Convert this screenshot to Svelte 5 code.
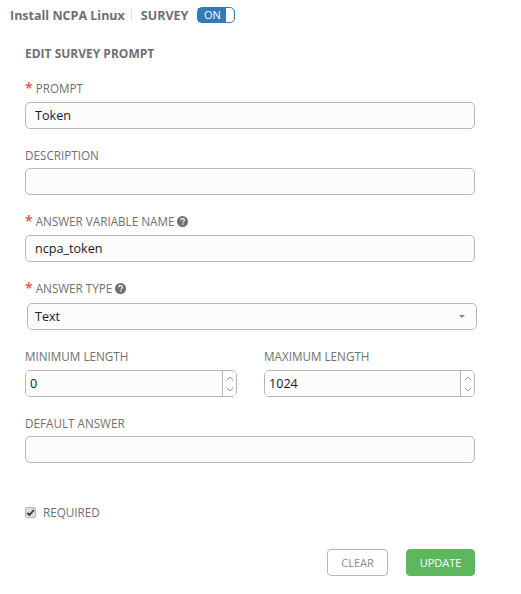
<script lang="ts">
    let prompt = $state("Token");
    let description = $state("");
    let variable = $state("ncpa_token");
    let minLength = $state("0");
    let maxLength = $state("1024");
    let defaultAnswer = $state("");
    let surveyOn = $state(true);
</script>

{#snippet help()}
    <svg class="help" viewBox="0 0 11 11" width="11" height="11" aria-hidden="true">
        <circle cx="5.5" cy="5.5" r="5.5" fill="#707070" />
        <path d="M3.7 4.3c0-1.1.9-1.7 1.9-1.7s1.8.7 1.8 1.5c0 1.3-1.4 1.2-1.4 2.3" fill="none" stroke="#fff" stroke-width="1.2" />
        <rect x="5.2" y="7.4" width="1.3" height="1.3" fill="#fff" />
    </svg>
{/snippet}

{#snippet spinner()}
    <div class="spinner">
        <svg viewBox="0 0 8 5" width="8" height="5"><path d="M.7 4.3 4 1l3.3 3.3" /></svg>
        <svg viewBox="0 0 8 5" width="8" height="5"><path d="M.7.7 4 4 7.3.7" /></svg>
    </div>
{/snippet}

<div class="page">
    <header class="title-bar">
        <span class="job-name">Install NCPA Linux</span>
        <span class="divider"></span>
        <span class="survey">SURVEY</span>
        <button class="toggle" class:on={surveyOn} onclick={() => (surveyOn = !surveyOn)}>
            <span class="toggle-label">ON</span>
            <span class="toggle-knob"></span>
        </button>
    </header>

    <form class="form" onsubmit={(e) => e.preventDefault()}>
        <h2>EDIT SURVEY PROMPT</h2>

        <div class="field first">
            <label for="prompt"><span class="req">*</span> PROMPT</label>
            <input id="prompt" bind:value={prompt} />
        </div>

        <div class="field">
            <label for="description">DESCRIPTION</label>
            <input id="description" bind:value={description} />
        </div>

        <div class="field plus-one">
            <label for="variable"><span class="req">*</span> ANSWER VARIABLE NAME {@render help()}</label>
            <input id="variable" bind:value={variable} />
        </div>

        <div class="field plus-two">
            <label for="type"><span class="req">*</span> ANSWER TYPE {@render help()}</label>
            <div class="select" id="type">
                <span>Text</span>
                <span class="caret"></span>
            </div>
        </div>

        <div class="field plus-one two-col">
            <div>
                <label for="min">MINIMUM LENGTH</label>
                <div class="number">
                    <input id="min" bind:value={minLength} />
                    {@render spinner()}
                </div>
            </div>
            <div>
                <label for="max">MAXIMUM LENGTH</label>
                <div class="number">
                    <input id="max" bind:value={maxLength} />
                    {@render spinner()}
                </div>
            </div>
        </div>

        <div class="field">
            <label for="default">DEFAULT ANSWER</label>
            <input id="default" bind:value={defaultAnswer} />
        </div>

        <div class="required">
            <span class="check">
                <svg viewBox="0 0 9 9" width="9" height="9"><path d="M1.2 4.8 3.4 7l4.4-5" /></svg>
            </span>
            <span>REQUIRED</span>
        </div>

        <div class="actions">
            <button class="btn clear" type="button">CLEAR</button>
            <button class="btn update" type="submit">UPDATE</button>
        </div>
    </form>
</div>

<style>
    :global(body) {
        margin: 0;
        background: #fff;
    }

    .page {
        width: 521px;
        height: 594px;
        box-sizing: border-box;
        padding-top: 6px;
        font-family: "Open Sans", sans-serif;
        color: #707070;
        overflow: hidden;
    }

    .title-bar {
        display: flex;
        align-items: center;
        height: 18px;
        padding-left: 10px;
        font-size: 12.5px;
        font-weight: 700;
    }

    .divider {
        width: 1px;
        height: 13px;
        margin: 0 9px 0 6px;
        background: #e1e1e1;
    }

    .toggle {
        display: flex;
        align-items: stretch;
        width: 38px;
        height: 16px;
        margin-left: 9px;
        padding: 0;
        border: 1px solid #337ab7;
        border-radius: 5px;
        background: #fff;
        font: inherit;
    }

    .toggle-label {
        flex: 1;
        background: #337ab7;
        color: #fff;
        font-size: 11px;
        font-weight: 400;
        line-height: 14px;
        text-align: center;
    }

    .toggle-knob {
        width: 8px;
    }

    .form {
        padding: 0 46px 0 25px;
    }

    h2 {
        margin: 21px 0 0;
        font-size: 12px;
        font-weight: 700;
        line-height: 18px;
    }

    .field {
        margin-top: 17px;
    }

    .field.first {
        margin-top: 16px;
    }

    label {
        display: flex;
        align-items: center;
        height: 18px;
        margin-bottom: 4px;
        font-size: 11.7px;
        line-height: 18px;
        white-space: pre;
    }

    .first label,
    .plus-one label {
        margin-bottom: 5px;
    }

    .plus-two label {
        margin-bottom: 6px;
    }

    .req {
        color: #d9534f;
        font-size: 14px;
        font-weight: 600;
    }

    input {
        display: block;
        width: 100%;
        height: 27px;
        box-sizing: border-box;
        padding: 0 9px;
        border: 1px solid #b7b7b7;
        border-radius: 5px;
        background: #fcfcfc;
        color: #161b1f;
        font-family: inherit;
        font-size: 12.6px;
        outline: none;
    }

    .select {
        display: flex;
        align-items: center;
        justify-content: space-between;
        width: 450px;
        height: 27px;
        box-sizing: border-box;
        margin-left: 2px;
        padding: 0 11px 0 7px;
        border: 1px solid #b7b7b7;
        border-radius: 5px;
        background: #fcfcfc;
        color: #161b1f;
        font-size: 12.6px;
    }

    .caret {
        width: 0;
        height: 0;
        border-left: 3.5px solid transparent;
        border-right: 3.5px solid transparent;
        border-top: 3.5px solid #848992;
    }

    .two-col {
        display: grid;
        grid-template-columns: 212px 211px;
        column-gap: 27px;
    }

    .number {
        display: flex;
        height: 27px;
        box-sizing: border-box;
        border: 1px solid #b7b7b7;
        border-radius: 5px;
        background: #fcfcfc;
        overflow: hidden;
    }

    .number input {
        flex: 1;
        min-width: 0;
        height: 25px;
        padding: 0 4px;
        border: 0;
        border-radius: 0;
    }

    .spinner {
        display: flex;
        flex-direction: column;
        align-items: center;
        justify-content: center;
        gap: 6px;
        width: 13px;
        border-left: 1px solid #b7b7b7;
        background: #fff;
    }

    .spinner path {
        fill: none;
        stroke: #9a9a9a;
        stroke-width: 1;
    }

    .required {
        display: flex;
        align-items: center;
        gap: 7px;
        margin-top: 40px;
        height: 18px;
        font-size: 11.7px;
    }

    .check {
        display: flex;
        align-items: center;
        justify-content: center;
        width: 9px;
        height: 9px;
        border: 1px solid #b4b4b4;
        border-radius: 2px;
        background: #dcdcdc;
    }

    .check path {
        fill: none;
        stroke: #333;
        stroke-width: 1.8;
    }

    .actions {
        display: flex;
        justify-content: flex-end;
        gap: 18px;
        margin-top: 28px;
    }

    .btn {
        height: 27px;
        padding: 0;
        border-radius: 4px;
        font-family: inherit;
        font-size: 11px;
    }

    .clear {
        width: 61px;
        border: 1px solid #b7b7b7;
        background: #fff;
        color: #848992;
    }

    .update {
        width: 69px;
        border: 1px solid #5cb85c;
        background: #5cb85c;
        color: #fff;
    }
</style>
